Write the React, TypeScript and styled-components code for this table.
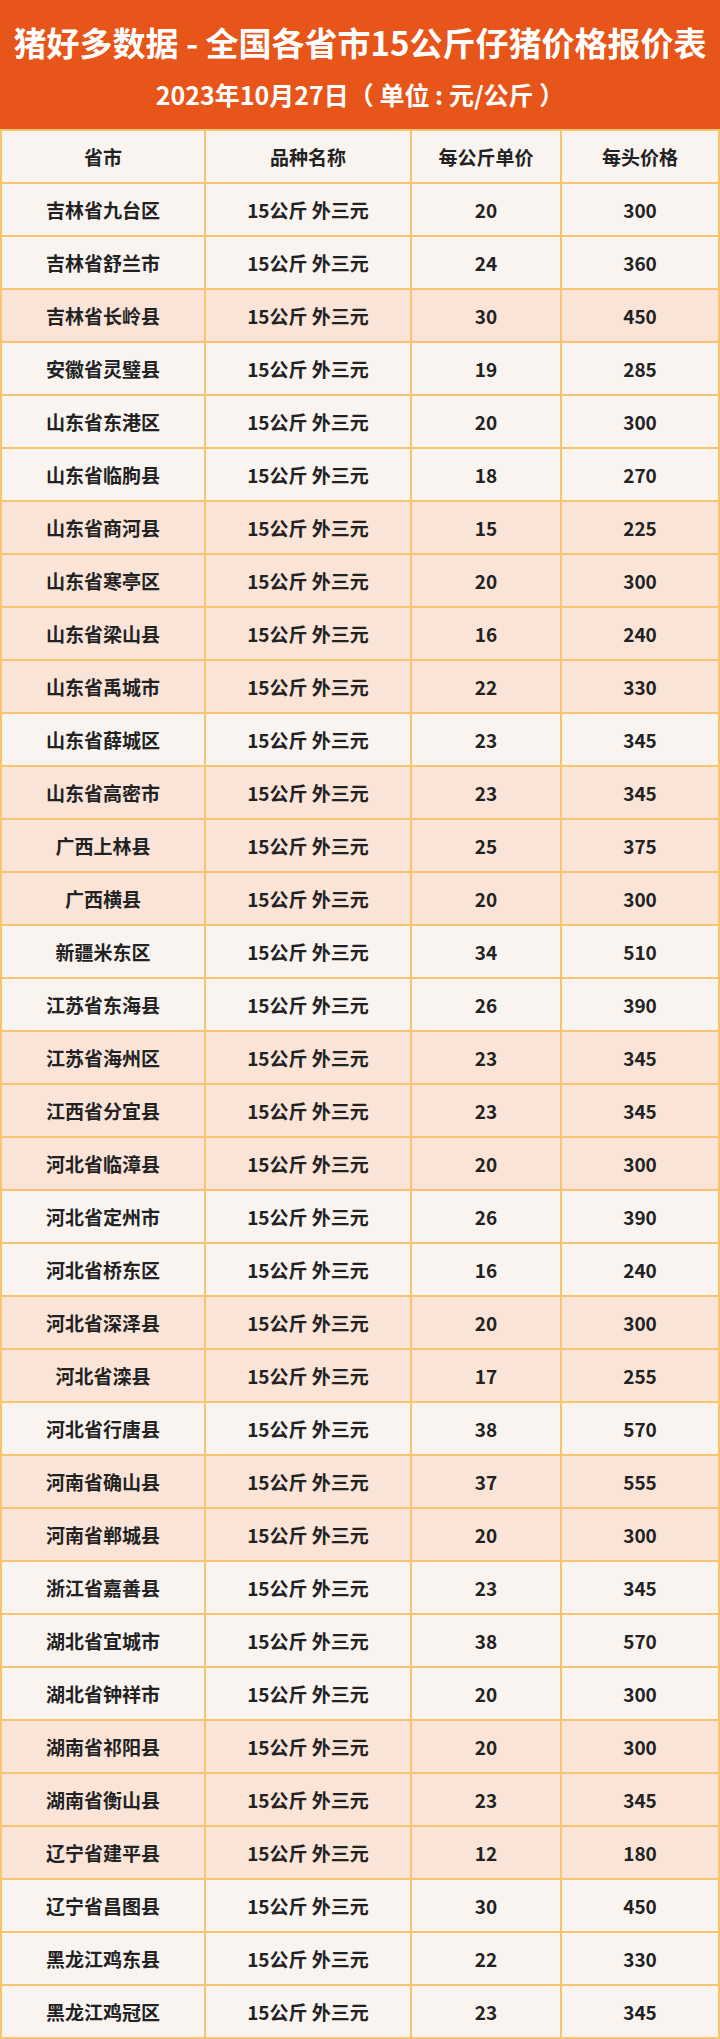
import styled, { createGlobalStyle } from 'styled-components';

const GlobalStyle = createGlobalStyle`
  body {
    margin: 0;
    font-family: "Noto Sans CJK SC", "Noto Sans", sans-serif;
  }
`

type Item = [string, number, number, boolean]

const rows: Item[] = [
  ['吉林省九台区', 20, 300, false],
  ['吉林省舒兰市', 24, 360, false],
  ['吉林省长岭县', 30, 450, true],
  ['安徽省灵璧县', 19, 285, false],
  ['山东省东港区', 20, 300, false],
  ['山东省临朐县', 18, 270, false],
  ['山东省商河县', 15, 225, true],
  ['山东省寒亭区', 20, 300, true],
  ['山东省梁山县', 16, 240, true],
  ['山东省禹城市', 22, 330, true],
  ['山东省薛城区', 23, 345, false],
  ['山东省高密市', 23, 345, true],
  ['广西上林县', 25, 375, true],
  ['广西横县', 20, 300, true],
  ['新疆米东区', 34, 510, false],
  ['江苏省东海县', 26, 390, false],
  ['江苏省海州区', 23, 345, true],
  ['江西省分宜县', 23, 345, true],
  ['河北省临漳县', 20, 300, true],
  ['河北省定州市', 26, 390, false],
  ['河北省桥东区', 16, 240, false],
  ['河北省深泽县', 20, 300, true],
  ['河北省滦县', 17, 255, true],
  ['河北省行唐县', 38, 570, false],
  ['河南省确山县', 37, 555, true],
  ['河南省郸城县', 20, 300, true],
  ['浙江省嘉善县', 23, 345, false],
  ['湖北省宜城市', 38, 570, false],
  ['湖北省钟祥市', 20, 300, false],
  ['湖南省祁阳县', 20, 300, true],
  ['湖南省衡山县', 23, 345, true],
  ['辽宁省建平县', 12, 180, true],
  ['辽宁省昌图县', 30, 450, false],
  ['黑龙江鸡东县', 22, 330, false],
  ['黑龙江鸡冠区', 23, 345, false],
]

export default () => {
  return (
    <Page>
      <GlobalStyle />
      <Banner>
        <Title>猪好多数据 - 全国各省市15公斤仔猪价格报价表</Title>
        <Subtitle>2023年10月27日（ 单位 : 元/公斤 ）</Subtitle>
      </Banner>
      <Table>
        <Row>
          <Cell>省市</Cell>
          <Cell>品种名称</Cell>
          <Cell>每公斤单价</Cell>
          <Cell>每头价格</Cell>
        </Row>
        {rows.map(([place, unit, total, hot]) => (
          <Row key={place}>
            <Cell $hot={hot}>{place}</Cell>
            <Cell $hot={hot}>15公斤 外三元</Cell>
            <Cell $hot={hot}>{unit}</Cell>
            <Cell $hot={hot}>{total}</Cell>
          </Row>
        ))}
      </Table>
    </Page>
  )
}

const Page = styled.div`
  width: 720px;
  background: #f9f4f0;
`

const Banner = styled.div`
  height: 129px;
  background: #e8551a;
  color: #fff;
  display: flex;
  flex-direction: column;
  align-items: center;
  font-weight: bold;
`

const Title = styled.div`
  margin-top: 20px;
  font-size: 33px;
  line-height: 44px;
`

const Subtitle = styled.div`
  margin-top: 13px;
  font-size: 25px;
  line-height: 34px;
`

const Table = styled.div`
  display: flex;
  flex-direction: column;
  gap: 2px;
  padding: 2px;
  background: #f8c470;
`

const Row = styled.div`
  display: grid;
  grid-template-columns: 202px 204px 148px 1fr;
  gap: 2px;
`

const Cell = styled.div<{ $hot?: boolean }>`
  height: 51px;
  display: flex;
  align-items: center;
  justify-content: center;
  background: ${p => (p.$hot ? '#fae4d8' : '#f9f4f0')};
  color: #222;
  font-size: 19px;
  font-weight: bold;
`
